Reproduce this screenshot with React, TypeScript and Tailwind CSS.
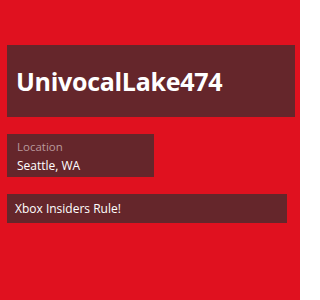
export default function App() {
  return (
    <div
      className="h-[300px] w-[300px] overflow-hidden bg-[#e0111f] pt-[45px] text-white"
      style={{ fontFamily: '"Open Sans", "Noto Sans", sans-serif' }}
    >
      {/* Gamertag */}
      <div className="ml-[7px] flex h-[72px] w-[288px] items-center bg-[#65262b] pl-[9px]">
        <span className="text-[25px] font-bold leading-none tracking-[-0.3px]">UnivocalLake474</span>
      </div>

      {/* Location */}
      <div className="ml-[7px] mt-[17px] flex h-[43px] w-[147px] flex-col justify-center gap-[4px] bg-[#65262b] pl-[10px]">
        <span className="text-[11.5px] leading-[15px] text-[#b9999c]">Location</span>
        <span className="text-[12px] leading-[15px]">Seattle, WA</span>
      </div>

      {/* Bio */}
      <div className="ml-[7px] mt-[17px] flex h-[29px] w-[280px] items-center bg-[#65262b] pl-[8px]">
        <span className="text-[12px] leading-none">Xbox Insiders Rule!</span>
      </div>
    </div>
  );
}
